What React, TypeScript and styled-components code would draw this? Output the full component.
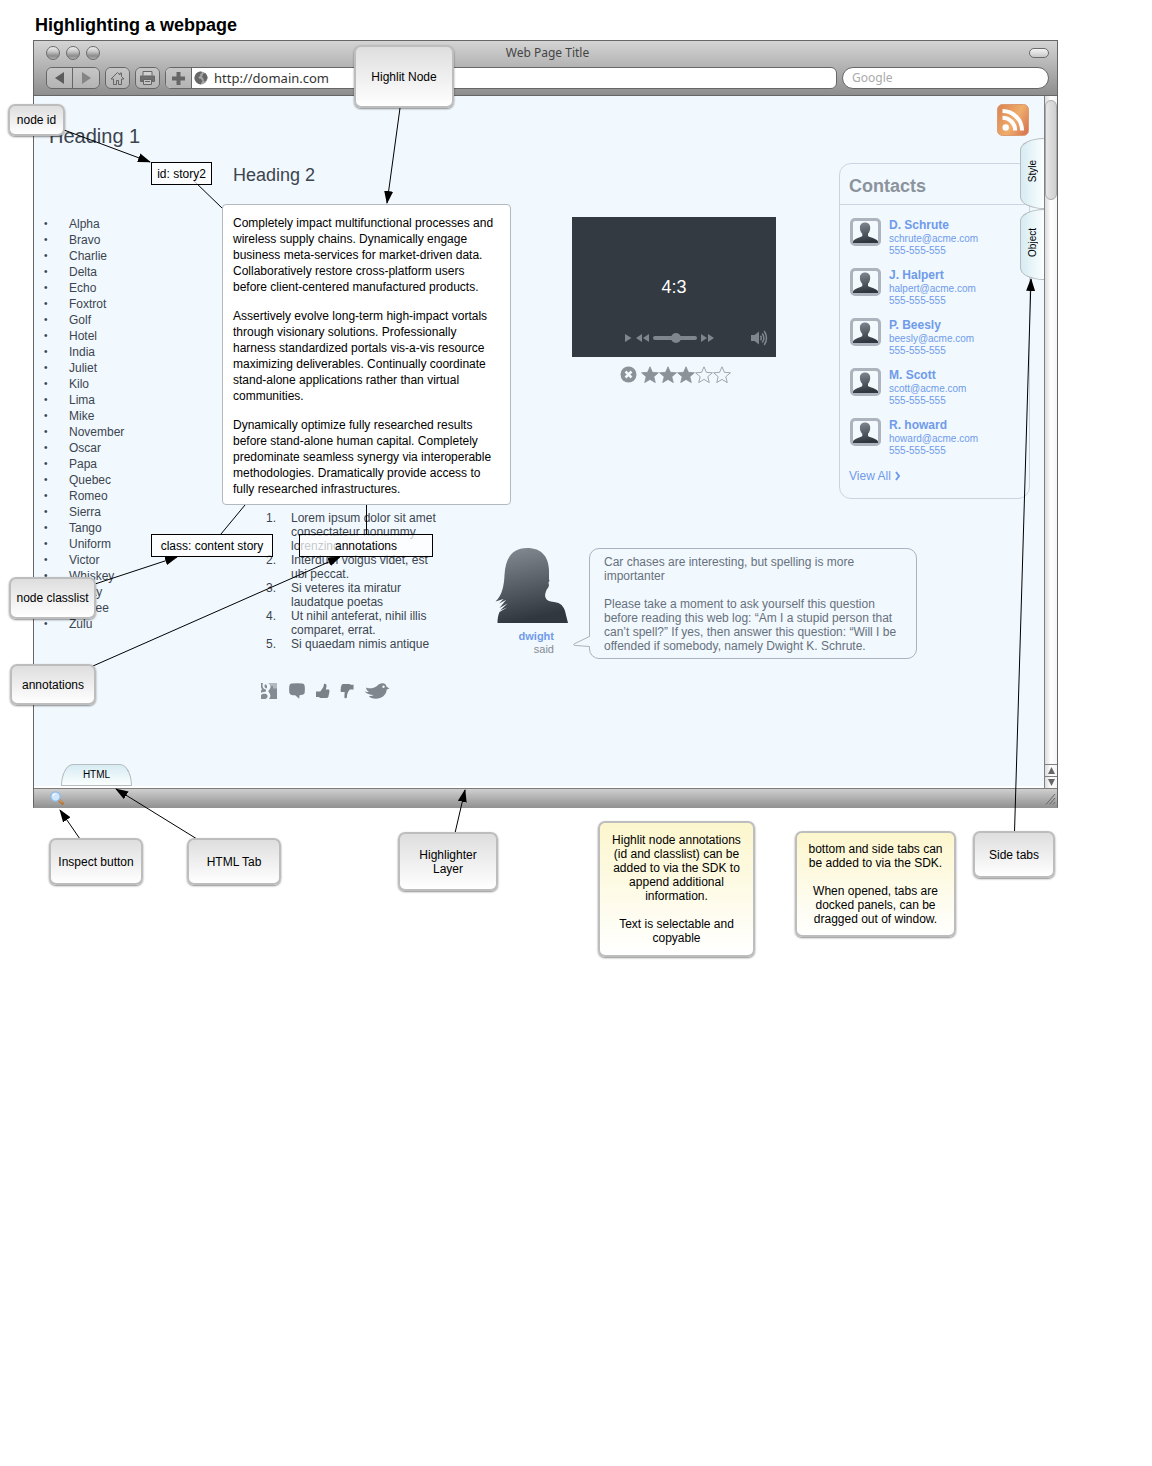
import React from "react";
import styled, { createGlobalStyle } from "styled-components";

const ink = "#3c454f";
const blue = "#6f9bea";
const muted = "#858c94";

const Global = createGlobalStyle`
  *, *::before, *::after { box-sizing: border-box; }
  body { margin: 0; background: #fff; color: #000; font: 12px/14px "Liberation Sans", Arial, Helvetica, sans-serif; }
  h1, h2, h3, p, ul, ol, figure { margin: 0; padding: 0; }
  ul, ol { list-style: none; }
  button { font: inherit; color: inherit; padding: 0; margin: 0; border: 0; background: none; cursor: pointer; }
  input { font: inherit; margin: 0; }
  a { color: inherit; text-decoration: none; }
  svg { display: block; }
`;

const Canvas = styled.main`
  position: relative;
  min-height: 100vh;
  padding: 13px 94px 0 33px;
`;
const DiagramTitle = styled.h1`
  font-size: 18px;
  line-height: 24px;
  padding: 0 0 3px 2px;
`;

/* ---- browser window ---- */
const Window = styled.section`
  border: 1px solid #666;
  border-bottom-color: #939393;
`;
const Chrome = styled.header`
  background: linear-gradient(#d4d4d4, #8e8e8e);
  border-bottom: 1px solid #666;
  padding: 0 8px 6px 12px;
  font-family: "Noto Sans", "Open Sans", sans-serif;
`;
const TitleBar = styled.div`
  display: grid;
  grid-template-columns: 1fr auto 1fr;
  align-items: center;
  height: 24px;
  margin-bottom: 2px;
`;
const Lights = styled.div`
  display: flex;
  gap: 6px;
`;
const Light = styled.button`
  width: 14px;
  height: 14px;
  border-radius: 50%;
  border: 1px solid #6b6b6b;
  background: linear-gradient(#f0f0f0, #c4c4c4 40%, #8a8a8a 75%, #b4b4b4);
`;
const WindowTitle = styled.span`
  font-size: 12px;
  line-height: 16px;
  color: #444;
`;
const Collapse = styled.button`
  justify-self: end;
  width: 20px;
  height: 10px;
  border: 1px solid #6b6b6b;
  border-radius: 5px;
  background: linear-gradient(#f4f4f4, #c8c8c8);
`;
const Toolbar = styled.div`
  display: flex;
  gap: 5px;
  height: 22px;
`;
const Segment = styled.div`
  display: flex;
  border: 1px solid #666;
  border-radius: 6px;
  overflow: hidden;
`;
const ToolButton = styled.button<{ $w: number; $divided?: boolean }>`
  width: ${(p) => p.$w}px;
  display: flex;
  align-items: center;
  justify-content: center;
  background: linear-gradient(#c6c6c6, #b4b4b4);
  border-right: ${(p) => (p.$divided ? "1px solid #666" : "0")};
`;
const Address = styled(Segment)`
  flex: 1;
  background: #fff;
`;
const AddressLabel = styled.label`
  flex: 1;
  display: flex;
  align-items: center;
  gap: 6px;
  padding-left: 2px;
`;
const TextField = styled.input<{ $size: number }>`
  flex: 1;
  min-width: 0;
  border: 0;
  padding: 0;
  outline: 0;
  background: none;
  font-size: ${(p) => p.$size}px;
  line-height: 16px;
  color: #333;
  &::placeholder { color: #aaa; opacity: 1; }
`;
const SearchBox = styled.label`
  width: 207px;
  display: flex;
  border: 1px solid #666;
  border-radius: 11px;
  background: #fff;
  padding: 0 9px;
`;

const Viewport = styled.div`
  display: flex;
`;
const Page = styled.div`
  position: relative;
  flex: 1;
  min-width: 0;
  background: #f1f8fe;
  border-bottom: 2px solid #fff;
  color: ${ink};
`;
const PageHeader = styled.div`
  display: flex;
  justify-content: space-between;
  align-items: flex-start;
  padding: 8px 15px 15px;
`;
const HeadingOne = styled.h2`
  font-size: 20px;
  line-height: 24px;
  font-weight: 400;
  margin-top: 20px;
`;
const HeadingTwo = styled.h3`
  font-size: 18px;
  line-height: 24px;
  font-weight: 400;
  padding-left: 11px;
  margin-bottom: 17px;
`;
const Columns = styled.div`
  display: flex;
  align-items: flex-start;
`;
const Bullets = styled.ul`
  width: 188px;
  padding: 53px 0 0 10px;
`;
const Bullet = styled.li`
  display: grid;
  grid-template-columns: 25px 1fr;
  line-height: 16px;
  &::before { content: "•"; font-size: 10px; }
`;
const MainColumn = styled.div`
  flex: 1;
  min-width: 0;
`;
const Story = styled.article`
  width: 289px;
`;
const StoryBox = styled.div`
  display: grid;
  gap: 13px;
  padding: 10px 10px 7px;
  border: 1px solid #b3b9bf;
  border-radius: 4px;
  background: #fff;
  color: #000;
  line-height: 16px;
`;
const Media = styled.div`
  width: 204px;
  margin: 54px 0 0 61px;
`;
const Video = styled.figure`
  display: grid;
  grid-template-rows: 1fr 24px 1fr;
  height: 140px;
  background: #343a42;
  color: #fff;
`;
const Ratio = styled.figcaption`
  grid-row: 2;
  text-align: center;
  font-size: 18px;
  line-height: 24px;
`;
const Controls = styled.div`
  grid-row: 3;
  align-self: end;
  display: flex;
  align-items: center;
  gap: 4px;
  padding: 0 8px 11px 53px;
`;
const Spacer = styled.span`
  flex: 1;
`;
const Seek = styled.input`
  appearance: none;
  width: 44px;
  height: 10px;
  background: none;
  &::-webkit-slider-runnable-track { height: 4px; border-radius: 2px; background: #80868d; }
  &::-webkit-slider-thumb { appearance: none; width: 10px; height: 10px; margin-top: -3px; border-radius: 50%; background: #80868d; }
`;
const Rating = styled.div`
  display: flex;
  padding: 9px 0 0 48px;
`;
const ClearButton = styled.button`
  margin-right: 4px;
`;

const Contacts = styled.aside`
  width: 191px;
  margin: 0 14px 0 auto;
  border: 1px solid #cbd4de;
  border-radius: 12px;
  padding-bottom: 15px;
  color: ${blue};
`;
const ContactsTitle = styled.h3`
  font-size: 18px;
  line-height: 22px;
  padding: 11px 9px 7px;
  border-bottom: 1px solid #cbd4de;
  color: #8b939c;
`;
const ContactList = styled.ul`
  display: grid;
  gap: 11px;
  padding: 13px 10px 0;
`;
const Contact = styled.li`
  display: flex;
  gap: 8px;
`;
const ContactText = styled.div`
  display: grid;
  font-size: 10px;
  line-height: 12px;
`;
const ContactName = styled.strong`
  font-size: 12px;
  line-height: 15px;
`;
const ViewAll = styled.a`
  display: flex;
  align-items: center;
  gap: 4px;
  margin: 12px 9px 0;
  line-height: 14px;
`;

const LowerRow = styled.div`
  display: flex;
  align-items: flex-start;
  gap: 54px;
  margin-top: 6px;
`;
const Steps = styled.ol`
  width: 219px;
  padding-left: 44px;
  counter-reset: step;
`;
const Step = styled.li`
  display: grid;
  grid-template-columns: 25px 1fr;
  counter-increment: step;
  &::before { content: counter(step) "."; }
`;
const Comment = styled.div`
  display: flex;
  margin-top: 37px;
`;
const Author = styled.div`
  width: 73px;
  font-size: 11px;
  line-height: 13px;
  text-align: right;
  color: ${muted};
`;
const AuthorName = styled.a`
  display: block;
  margin: 6px 14px 0 0;
  font-weight: 700;
  color: ${blue};
`;
const Said = styled.span`
  display: block;
  margin-right: 14px;
`;
const Bubble = styled.blockquote`
  position: relative;
  width: 328px;
  margin: 0 0 0 21px;
  padding: 6px 18px 5px 14px;
  border: 1px solid #aab3c0;
  border-radius: 10px;
  color: #67717c;
  display: grid;
  gap: 14px;
`;
const Tail = styled.svg`
  position: absolute;
  left: -18px;
  bottom: 8px;
`;
const Social = styled.div`
  display: flex;
  align-items: center;
  gap: 10px;
  padding: 24px 0 65px 39px;
`;
const IconButton = styled.button`
  display: block;
`;
const BottomTab = styled.button`
  width: 71px;
  height: 22px;
  margin-left: 27px;
  display: block;
  border: 1px solid #b6bcbf;
  border-radius: 12px 12px 0 0 / 22px 22px 0 0;
  background: linear-gradient(#d6ecf2, #fbfeff);
  font-size: 10px;
  color: #000;
`;
const SideTabs = styled.div`
  position: absolute;
  top: 42px;
  right: 0;
  display: grid;
`;
const SideTab = styled.button`
  width: 24px;
  height: 71px;
  border: 1px solid #b6bcbf;
  border-right: 0;
  border-radius: 24px 0 0 24px / 12px 0 0 12px;
  background: linear-gradient(90deg, #d6ecf2, #fbfeff);
  font-size: 10px;
  line-height: 14px;
  color: #000;
`;
const SideLabel = styled.span`
  display: inline-block;
  writing-mode: vertical-rl;
  transform: rotate(180deg);
`;

const Scrollbar = styled.div`
  width: 13px;
  display: flex;
  flex-direction: column;
  border-left: 1px solid #808080;
  background: linear-gradient(90deg, #dcdcdc, #fff 50%, #f4f4f4);
`;
const ScrollThumb = styled.div`
  height: 100px;
  margin: 4px 0 auto;
  border: 1px solid #aaa;
  border-radius: 6px;
  background: linear-gradient(90deg, #e6e6e6, #cfcfcf);
`;
const ScrollButton = styled.button`
  height: 12px;
  display: grid;
  place-items: center;
  border-top: 1px solid #808080;
  color: #666;
`;
const StatusBar = styled.footer`
  display: flex;
  justify-content: space-between;
  align-items: center;
  height: 19px;
  padding: 0 1px 0 16px;
  border-top: 1px solid #7c7c7c;
  background: linear-gradient(#cfcfcf, #939393);
`;

/* ---- diagram layer: nodes placed on a free canvas ---- */
type Place = { $x: number; $y: number; $w: number; $h: number };
const DiagramNode = styled.div<Place>`
  position: absolute;
  left: ${(p) => p.$x}px;
  top: ${(p) => p.$y}px;
  width: ${(p) => p.$w}px;
  height: ${(p) => p.$h}px;
  display: flex;
  flex-direction: column;
  align-items: center;
  justify-content: center;
  gap: 14px;
  text-align: center;
`;
const Callout = styled(DiagramNode)<{ $note?: boolean }>`
  padding: 0 ${(p) => (p.$note ? 8 : 2)}px;
  border: 2px solid #bdbdbd;
  border-radius: 7px;
  background: linear-gradient(${(p) => (p.$note ? "#fcf6cd" : "#dedede")}, #fff);
  box-shadow: 0 1px 2px rgba(0, 0, 0, 0.45);
`;
const Tag = styled(DiagramNode)`
  border: 1px solid #000;
  background: rgba(255, 255, 255, 0.7);
`;
const Arrows = styled.svg`
  position: absolute;
  inset: 0;
  width: 100%;
  height: 100%;
  pointer-events: none;
`;

const words = ["Alpha", "Bravo", "Charlie", "Delta", "Echo", "Foxtrot", "Golf", "Hotel", "India", "Juliet", "Kilo", "Lima", "Mike", "November", "Oscar", "Papa", "Quebec", "Romeo", "Sierra", "Tango", "Uniform", "Victor", "Whiskey", "X-Ray", "Yankee", "Zulu"];
const story = [
  "Completely impact multifunctional processes and wireless supply chains. Dynamically engage business meta-services for market-driven data. Collaboratively restore cross-platform users before client-centered manufactured products.",
  "Assertively evolve long-term high-impact vortals through visionary solutions. Professionally harness standardized portals vis-a-vis resource maximizing deliverables. Continually coordinate stand-alone applications rather than virtual communities.",
  "Dynamically optimize fully researched results before stand-alone human capital. Completely predominate seamless synergy via interoperable methodologies. Dramatically provide access to fully researched infrastructures.",
];
const steps = [
  "Lorem ipsum dolor sit amet consectateur nonummy lorenzino",
  "Interdum volgus videt, est ubi peccat.",
  "Si veteres ita miratur laudatque poetas",
  "Ut nihil anteferat, nihil illis comparet, errat.",
  "Si quaedam nimis antique",
];
const people = [
  ["D. Schrute", "schrute@acme.com"],
  ["J. Halpert", "halpert@acme.com"],
  ["P. Beesly", "beesly@acme.com"],
  ["M. Scott", "scott@acme.com"],
  ["R. howard", "howard@acme.com"],
];
const callouts: { at: [number, number, number, number]; text: string[]; note?: boolean }[] = [
  { at: [354, 45, 100, 63], text: ["Highlit Node"] },
  { at: [8, 104, 57, 32], text: ["node id"] },
  { at: [9, 577, 87, 42], text: ["node classlist"] },
  { at: [10, 664, 86, 41], text: ["annotations"] },
  { at: [49, 838, 94, 47], text: ["Inspect button"] },
  { at: [187, 838, 94, 47], text: ["HTML Tab"] },
  { at: [398, 832, 100, 59], text: ["Highlighter", "Layer"] },
  { at: [973, 831, 82, 47], text: ["Side tabs"] },
  { at: [598, 821, 157, 136], note: true, text: ["Highlit node annotations (id and classlist) can be added to via the SDK to append additional information.", "Text is selectable and copyable"] },
  { at: [795, 831, 161, 106], note: true, text: ["bottom and side tabs can be added to via the SDK.", "When opened, tabs are docked panels, can be dragged out of window."] },
];
const tags: { at: [number, number, number, number]; text: string }[] = [
  { at: [151, 162, 61, 23], text: "id: story2" },
  { at: [151, 534, 122, 23], text: "class: content story" },
  { at: [299, 534, 134, 23], text: "annotations" },
];
const arrows = ["M64 130L150 162", "M400 108L387 203", "M95 584L177 557", "M93 666L340 557", "M80 839L60 810", "M197 839L116 789", "M455 833L465 790", "M1014.5 832L1031 279"];
const leaders = ["M193 180L222 208", "M245 505L221 534", "M366.5 505V534"];

const starPath = "M9 .8l2.400 5.500 6 .5-4.600 3.900 1.500 5.900L9 13.400l-5.300 3.200 1.500-5.900L.6 6.800l6-.5z";

const Avatar = () => (
  <svg width="31" height="28" viewBox="0 0 31 28" aria-hidden="true">
    <rect x="1.500" y="1.500" width="28" height="25" rx="3.500" fill="#f4f9fe" stroke="#adb4bd" strokeWidth="3" />
    <path d="M15 4.500c3.400 0 5.200 2.200 5.200 5.200 0 2.800-1 4.700-2.200 6v2.200c1.500 1.600 8.500 2 10 5.500V25H3v-1.600c1.500-3.500 8-3.900 9.300-5.500v-2.200c-1.300-1.300-2.400-3.200-2.400-6 0-3 1.800-5.200 5.100-5.200z" fill="url(#shade)" />
  </svg>
);

export default function App() {
  return (
    <Canvas>
      <Global />
      <svg width="0" height="0" style={{ position: "absolute" }} aria-hidden="true">
        <defs>
          <linearGradient id="shade" x1="0" y1="0" x2="0.2" y2="1">
            <stop offset="0" stopColor="#868d95" />
            <stop offset="1" stopColor="#31373e" />
          </linearGradient>
        </defs>
      </svg>
      <DiagramTitle>Highlighting a webpage</DiagramTitle>

      <Window aria-label="Browser window">
        <Chrome>
          <TitleBar>
            <Lights>
              <Light aria-label="Close" />
              <Light aria-label="Minimize" />
              <Light aria-label="Zoom" />
            </Lights>
            <WindowTitle>Web Page Title</WindowTitle>
            <Collapse aria-label="Toggle toolbar" />
          </TitleBar>
          <Toolbar>
            <Segment>
              <ToolButton $w={26} $divided aria-label="Back">
                <svg width="9" height="12"><path d="M0 6l9-6v12z" fill="#5c5c5c" /></svg>
              </ToolButton>
              <ToolButton $w={26} aria-label="Forward">
                <svg width="9" height="12"><path d="M9 6L0 0v12z" fill="#858585" /></svg>
              </ToolButton>
            </Segment>
            <Segment>
              <ToolButton $w={23} aria-label="Home">
                <svg width="15" height="15" viewBox="0 0 15 15" fill="none" stroke="#666">
                  <path d="M1 8L7.500 1.500 10 4V2h1.500v3.500L14 8h-2.500v5.500h-3v-4h-2v4h-3V8z" strokeLinejoin="round" />
                </svg>
              </ToolButton>
            </Segment>
            <Segment>
              <ToolButton $w={23} aria-label="Print">
                <svg width="15" height="14" viewBox="0 0 15 14" fill="none" stroke="#666">
                  <path d="M3 4.500v-4h9v4" fill="#d0d0d0" />
                  <path d="M.5 5h14v5.500H12v-2H3v2H.5z" fill="#707070" />
                  <path d="M3.500 8.500h8v5h-8zM5 10.500h5" fill="#c4c4c4" />
                </svg>
              </ToolButton>
            </Segment>
            <Address>
              <ToolButton $w={26} $divided aria-label="Add bookmark">
                <svg width="13" height="13"><path d="M4.500 0h4v4.500H13v4H8.500V13h-4V8.500H0v-4h4.500z" fill="#666" /></svg>
              </ToolButton>
              <AddressLabel>
                <svg width="14" height="14" viewBox="0 0 14 14" aria-hidden="true">
                  <circle cx="7" cy="7" r="6.500" fill="#a4a4a4" />
                  <path d="M1 4.500C2 2 4.500.5 7 .5l1 1.500-2 1 .5 1.500L4.500 6 5 7.500l2 .5 1.500 2L6.500 13.400C3 12.500.5 10 .5 7zM9 3l2-1c1.500 1.200 2.500 3 2.500 5l-1.500 3-2 .5-.5-3L8 6z" fill="#666" />
                </svg>
                <TextField $size={13} aria-label="Address" defaultValue="http://domain.com" />
              </AddressLabel>
            </Address>
            <SearchBox>
              <TextField $size={12} aria-label="Search" placeholder="Google" />
            </SearchBox>
          </Toolbar>
        </Chrome>

        <Viewport>
          <Page>
            <PageHeader>
              <HeadingOne>Heading 1</HeadingOne>
              <a href="#feed" aria-label="RSS feed">
                <svg width="32" height="32" viewBox="0 0 32 32">
                  <defs>
                    <linearGradient id="rss" x1="0" y1="0.3" x2="1" y2="0.9">
                      <stop offset="0" stopColor="#de8a57" />
                      <stop offset=".5" stopColor="#efae6b" />
                      <stop offset="1" stopColor="#d5714f" />
                    </linearGradient>
                  </defs>
                  <rect x=".5" y=".5" width="31" height="31" rx="5" fill="url(#rss)" stroke="#dd9a70" />
                  <circle cx="8.700" cy="23.500" r="3.200" fill="#fff" />
                  <path d="M5.500 13.800A12.700 12.700 0 0 1 18.200 26.500M5.500 7A19.500 19.500 0 0 1 25 26.500" fill="none" stroke="#fff" strokeWidth="4" />
                </svg>
              </a>
            </PageHeader>

            <Columns>
              <Bullets>
                {words.map((w) => <Bullet key={w}>{w}</Bullet>)}
              </Bullets>
              <MainColumn>
                <Columns>
                  <Story>
                    <HeadingTwo>Heading 2</HeadingTwo>
                    <StoryBox>
                      {story.map((p) => <p key={p}>{p}</p>)}
                    </StoryBox>
                  </Story>
                  <Media>
                    <Video>
                      <Ratio>4:3</Ratio>
                      <Controls>
                        <IconButton aria-label="Play">
                          <svg width="7" height="8"><path d="M0 0l6.500 4L0 8z" fill="#80868d" /></svg>
                        </IconButton>
                        <IconButton aria-label="Rewind">
                          <svg width="13" height="8"><path d="M6 0v8L0 4zM13 0v8L7 4z" fill="#80868d" /></svg>
                        </IconButton>
                        <Seek type="range" aria-label="Seek" min={0} max={100} defaultValue={54} />
                        <IconButton aria-label="Fast forward">
                          <svg width="13" height="8"><path d="M0 0v8l6-4zM7 0v8l6-4z" fill="#80868d" /></svg>
                        </IconButton>
                        <Spacer />
                        <IconButton aria-label="Volume">
                          <svg width="17" height="16" viewBox="0 0 17 16" fill="none" stroke="#80868d" strokeWidth="1.500">
                            <path d="M0 5h3.500L8 1.500v13L3.500 11H0z" fill="#80868d" stroke="none" />
                            <path d="M9.500 5.800q1.600 2.200 0 4.400M11.300 3.500q3.200 4.500 0 9M13.200 1q4.600 7 0 14" />
                          </svg>
                        </IconButton>
                      </Controls>
                    </Video>
                    <Rating>
                      <ClearButton aria-label="Clear rating">
                        <svg width="17" height="17" viewBox="0 0 17 17">
                          <circle cx="8.500" cy="8.500" r="8" fill="#8a929a" />
                          <path d="M5.500 5.500l6 6M11.500 5.500l-6 6" stroke="#f1f8fe" strokeWidth="2.500" />
                        </svg>
                      </ClearButton>
                      {[1, 2, 3, 4, 5].map((n) => (
                        <IconButton key={n} aria-label={`Rate ${n}`}>
                          <svg width="18" height="17" viewBox="0 0 18 17">
                            <path d={starPath} fill={n <= 3 ? "#8a929a" : "none"} stroke="#8a929a" strokeWidth=".8" />
                          </svg>
                        </IconButton>
                      ))}
                    </Rating>
                  </Media>
                  <Contacts>
                    <ContactsTitle>Contacts</ContactsTitle>
                    <ContactList>
                      {people.map(([name, mail]) => (
                        <Contact key={name}>
                          <Avatar />
                          <ContactText>
                            <ContactName>{name}</ContactName>
                            <a href={`mailto:${mail}`}>{mail}</a>
                            <span>555-555-555</span>
                          </ContactText>
                        </Contact>
                      ))}
                    </ContactList>
                    <ViewAll href="#contacts">
                      View All
                      <svg width="6" height="10" viewBox="0 0 6 10" aria-hidden="true"><path d="M1 1l3 4-3 4" fill="none" stroke={blue} strokeWidth="2" /></svg>
                    </ViewAll>
                  </Contacts>
                </Columns>

                <LowerRow>
                  <Steps>
                    {steps.map((s) => <Step key={s}>{s}</Step>)}
                  </Steps>
                  <Comment>
                    <Author>
                      <svg width="73" height="76" viewBox="0 0 73 76" aria-hidden="true">
                        <path d="M32 0C47 0 53.500 9 54 22v9l.5 2-1 1.500.5 3-1 2.500-1 1c-1.500 3.500-2.500 6-1.500 8.500 1 3 4 4.200 8.500 4.500 7 .8 9.500 4.500 11 9L73 75H2.500c0-4 .5-8 2-11L12 59.500l-7 3 7.500-7-8 4.500 6.500-8-7 3.500 4.500-4.500L.5 53.500C7.500 47 9 37 9.500 27 10.500 10 17 0 32 0z" fill="url(#shade)" />
                      </svg>
                      <AuthorName href="#dwight">dwight</AuthorName>
                      <Said>said</Said>
                    </Author>
                    <Bubble>
                      <p>Car chases are interesting, but spelling is more importanter</p>
                      <p>Please take a moment to ask yourself this question before reading this web log: “Am I a stupid person that can’t spell?” If yes, then answer this question: “Will I be offended if somebody, namely Dwight K. Schrute.</p>
                      <Tail width="19" height="16" viewBox="0 0 19 16" aria-hidden="true">
                        <path d="M17 3v10h2V3z" fill="#f1f8fe" />
                        <path d="M17.500 .5V2.500L4 9Q-1 11 4 11.500L17.500 12.500V15.500" fill="#f1f8fe" stroke="#aab3c0" />
                      </Tail>
                    </Bubble>
                  </Comment>
                </LowerRow>

                <Social>
                  <IconButton aria-label="Google">
                    <svg width="17" height="16" viewBox="0 0 17 16">
                      <path d="M7.500 0H16v16H8c2-2 1.800-5-.3-7C7 8.200 7.500 7.500 8.500 6.500c1.800-1.800 1.500-4.500-1-6.500z" fill="#858c94" />
                      <path d="M7.500 0H16v5.500h-4V3H10z" fill="#b3b9c0" />
                      <path d="M0 0h2C1 2.500 1.500 5.500 4.500 6.500c.8.700.8 1.300 0 2.200C3 8.800 1.500 9 0 9.700V7.500c1.200-.5 1-2 0-3z" fill="#858c94" />
                      <path d="M0 12c2-1.700 6-1.500 6.500.5.500 1.800-.8 3-2 3.500H0z" fill="#858c94" />
                      <path d="M4.500 1.200c1.800.8 2 3.200 1 4.200-2-.5-2.800-3.200-1-4.200z" fill="#858c94" />
                    </svg>
                  </IconButton>
                  <IconButton aria-label="Comment">
                    <svg width="18" height="16" viewBox="0 0 18 16"><path d="M3.500 .6Q9 0 14.500 .6q2 .2 2.200 2.400.4 3 0 6.500-.2 2-2.200 2.300-1.500.3-3 .4l-.3 3.600-4-3.500q-2 0-3.700-.4Q1.500 11.500 1.300 9.500q-.4-3.500 0-6.500Q1.500.8 3.500.6z" fill="#7f868e" /></svg>
                  </IconButton>
                  <IconButton aria-label="Like">
                    <svg width="14" height="16" viewBox="0 0 15 16"><path d="M0 8.500h4.500C6.500 6 8.500 4 8.500.5c2-.8 3 .5 2.800 2.500L10.500 6.500H14l.5 2-.5 1.300.2 1.200-.7 1.300v1.500L12 15.500H4.500L3 14.500H0z" fill="#7a8288" /></svg>
                  </IconButton>
                  <IconButton aria-label="Dislike">
                    <svg width="14" height="16" viewBox="0 0 15 16"><path d="M14.500 6.500h-4c-1.500 2.500-3 3.500-3 8.500-2 1.500-3 .5-2.800-1.500L5 9H1L.5 7 1 5.500.8 4l.7-1V1.500L3 .5h7l1.500.8h3z" fill="#7a8288" /></svg>
                  </IconButton>
                  <IconButton aria-label="Tweet">
                    <svg width="26" height="16" viewBox="0 0 26 16"><path d="M2 4.500c3.500 1.500 7.500 1 11-1.500C15 .8 17.500-.3 20 .5c1.500.5 2.300 1.700 2.600 3.200L25.500 5.500l-2.800 1C22.500 12 17.500 15.800 12 15.800c-3.800 0-6-1-7-2.800 2 .3 3.500 0 4.500-1-3.500 0-7-1.300-9-3.800 1.800.8 3.300 1 4.500.8C3.500 8 2.300 6.500 2 4.500z" fill="#7f868e" /><circle cx="19.500" cy="3.800" r="1.200" fill="#f1f8fe" /></svg>
                  </IconButton>
                </Social>
              </MainColumn>
            </Columns>

            <BottomTab>HTML</BottomTab>
            <SideTabs>
              <SideTab><SideLabel>Style</SideLabel></SideTab>
              <SideTab><SideLabel>Object</SideLabel></SideTab>
            </SideTabs>
          </Page>
          <Scrollbar>
            <ScrollThumb />
            <ScrollButton aria-label="Scroll up"><svg width="7" height="7"><path d="M3.500 0L7 7H0z" fill="currentColor" /></svg></ScrollButton>
            <ScrollButton aria-label="Scroll down"><svg width="7" height="7"><path d="M3.500 7L7 0H0z" fill="currentColor" /></svg></ScrollButton>
          </Scrollbar>
        </Viewport>

        <StatusBar>
          <IconButton aria-label="Inspect">
            <svg width="14" height="14" viewBox="0 0 14 14">
              <path d="M8.500 8.500l4 4" stroke="#b5793c" strokeWidth="3" strokeLinecap="round" />
              <path d="M8.500 8l3.500 3.500" stroke="#e8b878" />
              <circle cx="5.500" cy="5.500" r="4.700" fill="#cfe6fb" stroke="#8fb9e6" strokeWidth="1.200" />
              <path d="M3 5q.5-2.200 2.500-2.500" fill="none" stroke="#fff" strokeWidth="1.200" />
            </svg>
          </IconButton>
          <svg width="11" height="16" aria-hidden="true"><path d="M1 14.500L10 4M4.500 14.500L10 8M8 14.500L10 12" stroke="#666" /></svg>
        </StatusBar>
      </Window>

      <Arrows aria-hidden="true">
        <defs>
          <marker id="head" viewBox="0 0 13 10" markerWidth="13" markerHeight="10" refX="12" refY="5" orient="auto" markerUnits="userSpaceOnUse">
            <path d="M0 .5L13 5 0 9.500z" />
          </marker>
        </defs>
        {arrows.map((d) => <path key={d} d={d} stroke="#000" fill="none" markerEnd="url(#head)" />)}
        {leaders.map((d) => <path key={d} d={d} stroke="#000" fill="none" />)}
      </Arrows>
      {tags.map(({ at: [x, y, w, h], text }) => (
        <Tag key={text} $x={x} $y={y} $w={w} $h={h}>{text}</Tag>
      ))}
      {callouts.map(({ at: [x, y, w, h], text, note }) => (
        <Callout key={text[0]} $x={x} $y={y} $w={w} $h={h} $note={note}>
          {note
            ? text.map((t) => <p key={t}>{t}</p>)
            : <p>{text.map((t, i) => <React.Fragment key={t}>{i > 0 && <br />}{t}</React.Fragment>)}</p>}
        </Callout>
      ))}
    </Canvas>
  );
}
